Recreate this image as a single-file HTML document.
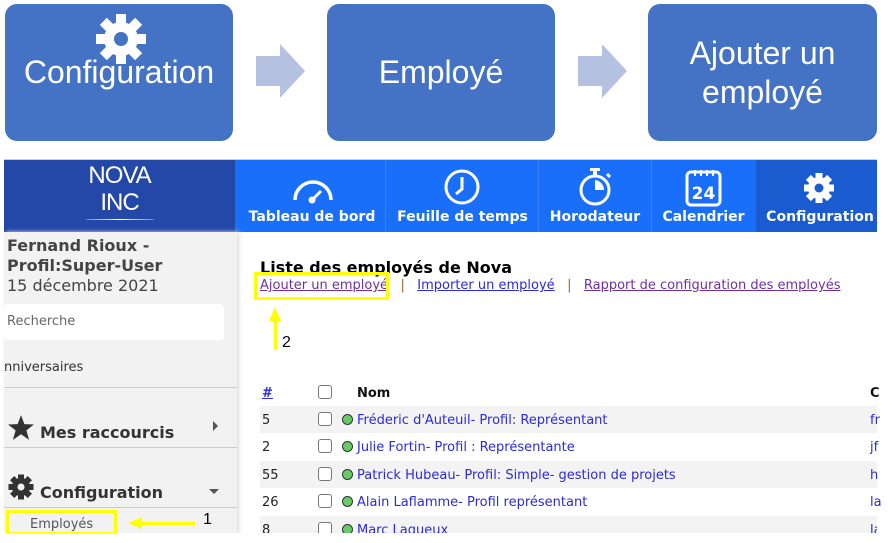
<!DOCTYPE html>
<html><head><meta charset="utf-8"><style>
*{margin:0;padding:0;box-sizing:border-box}
body{width:888px;height:543px;background:#fff;position:relative;overflow:hidden;font-family:"DejaVu Sans","Liberation Sans",sans-serif}
.a{position:absolute}
.box{position:absolute;top:4px;height:137px;background:#4472c4;border-radius:12px;color:#fff;font-family:"Liberation Sans",sans-serif;font-size:32px;display:flex;align-items:center;justify-content:center;text-align:center;line-height:39px}
.arr{position:absolute;top:44px;width:50px;height:55px}
.nav{position:absolute;top:160px;height:72px;color:#fff;font-weight:bold;font-size:14px;text-align:center}
.nav span{position:absolute;bottom:7px;left:0;right:0}
.row{position:absolute;left:260px;width:617px;height:27px;font-size:13px}
.row.s{background:#f3f3f3}
.row .n{position:absolute;left:2px;top:7px;color:#222}
.row .c{position:absolute;left:58px;top:6px;width:14px;height:14px;border:1px solid #777;border-radius:3px;background:#fff}
.row .d{position:absolute;left:82px;top:8px;width:11px;height:11px;border-radius:50%;background:#6c6;border:1.5px solid #333}
.row .t{position:absolute;left:97px;top:7px;color:#2a2ae0}
.row .e{position:absolute;left:610px;top:7px;color:#2a2ae0}
</style></head><body>
<div class="box" style="left:5px;width:228px"><div style="margin-top:-1px">Configuration</div></div>
<svg class="a" style="left:93px;top:13px" width="56" height="52" viewBox="0 0 56 52"><g fill="#fff" transform="translate(28,26)"><circle r="17"/><g id="t"><rect x="-5" y="-25" width="10" height="10"/></g><use href="#t" transform="rotate(45)"/><use href="#t" transform="rotate(90)"/><use href="#t" transform="rotate(135)"/><use href="#t" transform="rotate(180)"/><use href="#t" transform="rotate(225)"/><use href="#t" transform="rotate(270)"/><use href="#t" transform="rotate(315)"/><circle r="7" fill="#4472c4"/></g></svg>
<div class="box" style="left:327px;width:228px">Employé</div>
<div class="box" style="left:648px;width:229px">Ajouter un<br>employé</div>
<svg class="arr" style="left:256px"><polygon points="0,12 24,12 24,0 49,27 24,54 24,42 0,42" fill="#b4c1e1"/></svg>
<svg class="arr" style="left:578px"><polygon points="0,12 24,12 24,0 49,27 24,54 24,42 0,42" fill="#b4c1e1"/></svg>

<div class="a" style="left:4px;top:159px;width:873px;height:1px;background:#ccc"></div>
<div class="a" style="left:4px;top:160px;width:231px;height:72px;background:#2448a8;color:#fff;text-align:center;font-family:'Liberation Sans',sans-serif;font-size:24px;line-height:27px;font-weight:300">
<div style="margin-top:2px;letter-spacing:-1px">NOVA<br>INC</div>
<div style="width:68px;height:1px;background:linear-gradient(90deg,#6a85c8,#fff,#6a85c8);margin:3px auto 0"></div></div>
<div class="a" style="left:235px;top:160px;width:642px;height:72px;background:#1a6ffa"></div>
<div class="a" style="left:756px;top:160px;width:121px;height:72px;background:#1a5bd0"></div>
<div class="a" style="left:385px;top:160px;width:1px;height:72px;background:#3a7ef0"></div>
<div class="a" style="left:538px;top:160px;width:1px;height:72px;background:#3a7ef0"></div>
<div class="a" style="left:651px;top:160px;width:1px;height:72px;background:#3a7ef0"></div>
<div class="nav" style="left:243px;width:138px"><svg class="a" style="left:48px;top:12px" width="44" height="34" viewBox="0 0 44 34"><path d="M4 28 A18 18 0 0 1 40 28" stroke="#fff" stroke-width="3.5" fill="none"/><line x1="21" y1="28" x2="30" y2="19" stroke="#fff" stroke-width="3"/><circle cx="21" cy="28" r="3.5" fill="#fff"/></svg><span>Tableau de bord</span></div>
<div class="nav" style="left:390px;width:145px"><svg class="a" style="left:53px;top:8px" width="38" height="38"><circle cx="19" cy="19" r="16" stroke="#fff" stroke-width="3" fill="none"/><path d="M19 9 V21 L13 26" stroke="#fff" stroke-width="3" fill="none"/></svg><span>Feuille de temps</span></div>
<div class="nav" style="left:540px;width:110px"><svg class="a" style="left:36px;top:6px" width="38" height="42"><rect x="14" y="2" width="10" height="3" fill="#fff"/><rect x="17" y="4" width="4" height="5" fill="#fff"/><circle cx="19" cy="24" r="14" stroke="#fff" stroke-width="3" fill="none"/><path d="M19 24 V14 A10 10 0 0 1 28 24 Z" fill="#fff"/><line x1="31" y1="8" x2="34" y2="11" stroke="#fff" stroke-width="3"/></svg><span>Horodateur</span></div>
<div class="nav" style="left:652px;width:103px"><svg class="a" style="left:33px;top:8px" width="38" height="40"><rect x="2" y="4" width="33" height="33" rx="4" stroke="#fff" stroke-width="3" fill="none"/><path d="M10 2v6M16 2v6M22 2v6M28 2v6" stroke="#fff" stroke-width="2"/><text x="18.5" y="31" fill="#fff" font-size="17" font-weight="bold" text-anchor="middle" font-family="DejaVu Sans">24</text></svg><span>Calendrier</span></div>
<div class="nav" style="left:756px;width:128px"><svg class="a" style="left:47px;top:12px" width="32" height="32" viewBox="-16 -16 32 32"><g fill="#fff"><circle r="11"/><g id="u"><rect x="-3.5" y="-15" width="7" height="7"/></g><use href="#u" transform="rotate(45)"/><use href="#u" transform="rotate(90)"/><use href="#u" transform="rotate(135)"/><use href="#u" transform="rotate(180)"/><use href="#u" transform="rotate(225)"/><use href="#u" transform="rotate(270)"/><use href="#u" transform="rotate(315)"/><circle r="4.5" fill="#1a5bd0"/></g></svg><span>Configuration</span></div>

<div class="a" style="left:4px;top:232px;width:233px;height:301px;background:#f2f2f2;box-shadow:2px 0 4px #ddd"></div>
<div class="a" style="left:7px;top:236px;font-size:16px;font-weight:bold;color:#444;line-height:20px">Fernand Rioux -<br>Profil:Super-User</div>
<div class="a" style="left:7px;top:276px;font-size:16px;color:#444">15 décembre 2021</div>
<div class="a" style="left:4px;top:304px;width:220px;height:36px;background:#fff;border-radius:4px;font-size:13px;color:#666;padding:10px 3px">Recherche</div>
<div class="a" style="left:4px;top:360px;font-size:13px;color:#333">nniversaires</div>
<div class="a" style="left:4px;top:387px;width:233px;height:1px;background:#ccc"></div>
<svg class="a" style="left:7px;top:414px" width="28" height="27" viewBox="0 0 24 24"><path d="M12 1 L15 9 L23.5 9.3 L16.8 14.5 L19.2 23 L12 18 L4.8 23 L7.2 14.5 L0.5 9.3 L9 9 Z" fill="#333"/></svg>
<div class="a" style="left:40px;top:423px;font-size:16px;font-weight:bold;color:#333">Mes raccourcis</div>
<div class="a" style="left:213px;top:421px;width:0;height:0;border-top:5px solid transparent;border-bottom:5px solid transparent;border-left:5px solid #555"></div>
<div class="a" style="left:4px;top:447px;width:233px;height:1px;background:#ccc"></div>
<svg class="a" style="left:8px;top:474px" width="26" height="26" viewBox="-13 -13 26 26"><g fill="#333"><circle r="9"/><g id="v"><rect x="-3" y="-12.5" width="6" height="6"/></g><use href="#v" transform="rotate(45)"/><use href="#v" transform="rotate(90)"/><use href="#v" transform="rotate(135)"/><use href="#v" transform="rotate(180)"/><use href="#v" transform="rotate(225)"/><use href="#v" transform="rotate(270)"/><use href="#v" transform="rotate(315)"/><circle r="3.5" fill="#f2f2f2"/></g></svg>
<div class="a" style="left:40px;top:483px;font-size:16px;font-weight:bold;color:#333">Configuration</div>
<div class="a" style="left:209px;top:489px;border-left:5px solid transparent;border-right:5px solid transparent;border-top:5px solid #555"></div>
<div class="a" style="left:4px;top:507px;width:233px;height:1px;background:#ccc"></div>
<div class="a" style="left:6px;top:510px;width:111px;height:25px;border:3px solid #ff0"></div>
<div class="a" style="left:30px;top:517px;font-size:13px;color:#555">Employés</div>
<div class="a" style="left:140px;top:522px;width:55px;height:3px;background:#ff0"></div>
<div class="a" style="left:128px;top:517px;border-top:6px solid transparent;border-bottom:6px solid transparent;border-right:14px solid #ff0"></div>
<div class="a" style="left:203px;top:511px;font-size:16px;font-family:'Liberation Sans',sans-serif">1</div>

<div class="a" style="left:260px;top:258px;font-size:16px;font-weight:bold;color:#000">Liste des employés de Nova</div>
<div class="a" style="left:260px;top:278px;font-size:13px;color:#2a2ae0;white-space:pre"><u style="color:#7030a0">Ajouter un employé</u>   <span style="color:#a06030">|</span>   <u>Importer un employé</u>   <span style="color:#a06030">|</span>   <u style="color:#7030a0">Rapport de configuration des employés</u></div>
<div class="a" style="left:254px;top:272px;width:135px;height:28px;border:3px solid #ff0"></div>
<div class="a" style="left:274px;top:320px;width:3px;height:30px;background:#ff0"></div>
<div class="a" style="left:269px;top:307px;border-left:6px solid transparent;border-right:6px solid transparent;border-bottom:14px solid #ff0"></div>
<div class="a" style="left:282px;top:334px;font-size:16px;font-family:'Liberation Sans',sans-serif">2</div>

<div class="row" style="top:379px"><u class="n" style="color:#2a2ae0;font-weight:bold">#</u><i class="c"></i><b class="t" style="color:#111;left:97px">Nom</b><b class="e" style="color:#111">C</b></div>
<div class="row s" style="top:406px"><span class="n">5</span><i class="c"></i><i class="d"></i><span class="t">Fréderic d'Auteuil- Profil: Représentant</span><span class="e">fr</span></div>
<div class="row" style="top:433px"><span class="n">2</span><i class="c"></i><i class="d"></i><span class="t">Julie Fortin- Profil : Représentante</span><span class="e">jf</span></div>
<div class="row s" style="top:461px"><span class="n">55</span><i class="c"></i><i class="d"></i><span class="t">Patrick Hubeau- Profil: Simple- gestion de projets</span><span class="e">h</span></div>
<div class="row" style="top:488px"><span class="n">26</span><i class="c"></i><i class="d"></i><span class="t">Alain Laflamme- Profil représentant</span><span class="e">la</span></div>
<div class="row s" style="top:516px;height:17px;overflow:hidden"><span class="n">8</span><i class="c"></i><i class="d"></i><span class="t">Marc Lagueux</span><span class="e">la</span></div>
<div class="a" style="left:0;top:533px;width:888px;height:10px;background:#fff"></div>
</body></html>
